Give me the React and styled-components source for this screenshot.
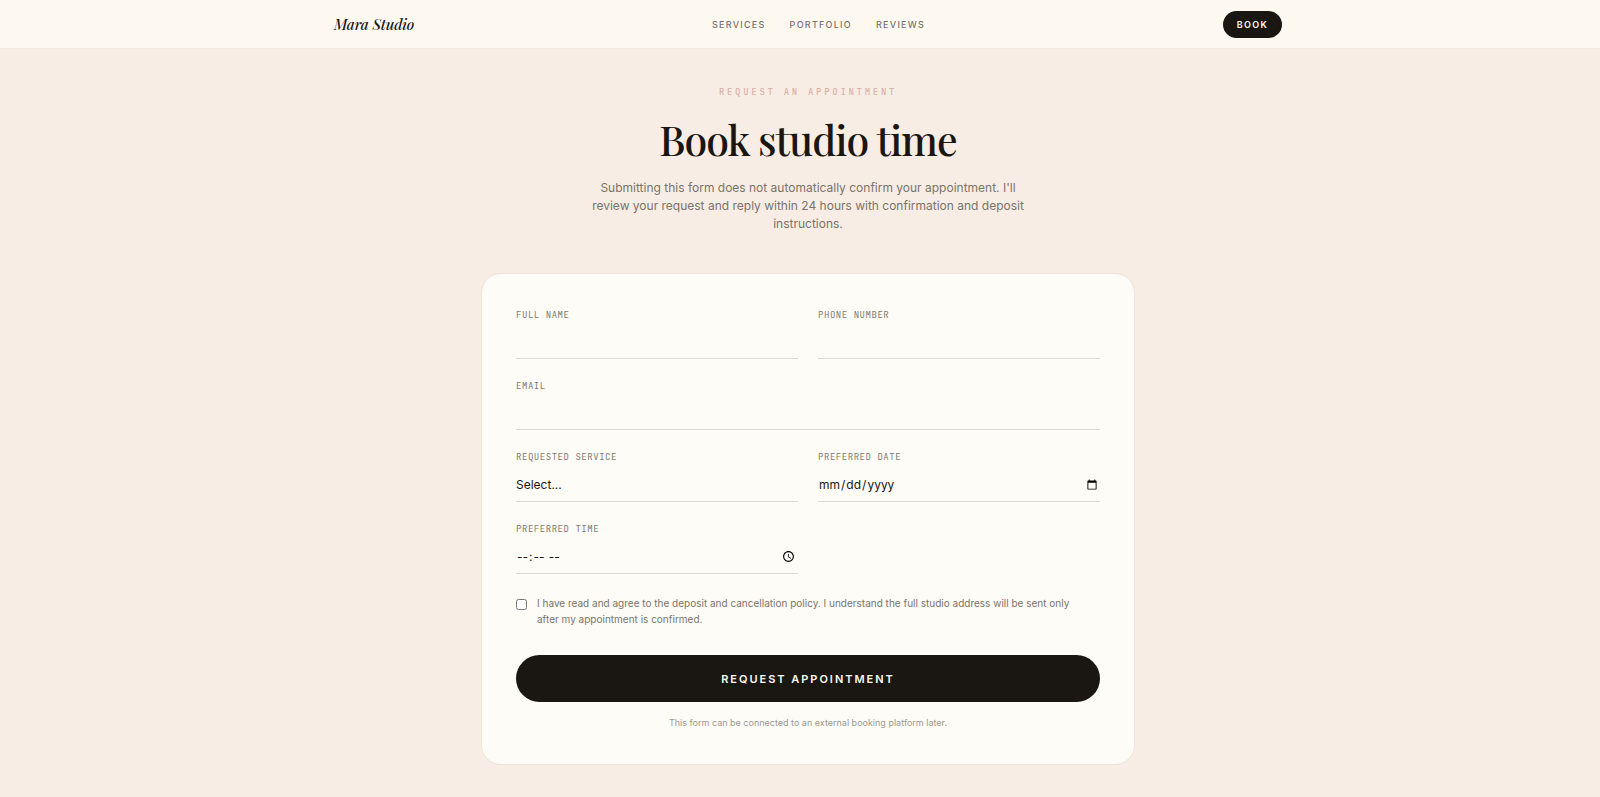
import { useState } from "react";
import styled, { createGlobalStyle } from "styled-components";

const GlobalStyle = createGlobalStyle`
  * {
    box-sizing: border-box;
  }

  body {
    margin: 0;
    background-color: #f8ede4;
    color: #1a1612;
    font-family: Inter, "Liberation Sans", sans-serif;
    -webkit-font-smoothing: antialiased;
  }
`;

const Header = styled.header`
  background-color: #fdf9f1;
  border-bottom: 1px solid #f3ebe2;
  padding-left: 16px;
`;

const HeaderInner = styled.div`
  max-width: 948px;
  height: 48px;
  margin: 0 auto;
  display: flex;
  align-items: center;
  justify-content: space-between;
`;

const Logo = styled.a`
  color: #1a1612;
  font-family: "Playfair Display", "Liberation Serif", serif;
  font-size: 15px;
  font-style: italic;
  font-weight: 500;
  letter-spacing: -0.01em;
  text-decoration: none;
  white-space: nowrap;
`;

const Nav = styled.nav`
  display: flex;
  gap: 24px;
`;

const NavLink = styled.a`
  color: #7a746c;
  font-size: 9px;
  font-weight: 500;
  letter-spacing: 0.14em;
  text-transform: uppercase;
  text-decoration: none;
`;

const BookLink = styled.a`
  display: flex;
  align-items: center;
  height: 27px;
  padding: 0 14px;
  border-radius: 14px;
  background-color: #1a1612;
  color: #fdf9f1;
  font-size: 9px;
  font-weight: 600;
  letter-spacing: 0.14em;
  text-transform: uppercase;
  text-decoration: none;
`;

const Main = styled.main`
  padding: 35px 0 33px 16px;
`;

const Intro = styled.section`
  display: flex;
  flex-direction: column;
  align-items: center;
  text-align: center;
`;

const Eyebrow = styled.p`
  margin: 0;
  color: #dbb0a9;
  font-family: "JetBrains Mono", "DejaVu Sans Mono", monospace;
  font-size: 9px;
  font-weight: 500;
  line-height: 16px;
  letter-spacing: 0.3em;
  text-transform: uppercase;
`;

const Title = styled.h1`
  margin: 15px 0 16px;
  font-family: "Playfair Display", "Liberation Serif", serif;
  font-size: 41px;
  font-weight: 500;
  line-height: 48px;
  letter-spacing: -0.025em;
`;

const Lead = styled.p`
  max-width: 436px;
  margin: 0;
  color: #7a736b;
  font-size: 12px;
  line-height: 18px;
`;

const Card = styled.form`
  max-width: 654px;
  margin: 40px auto 0;
  padding: 34px;
  border: 1px solid #eee5db;
  border-radius: 20px;
  background-color: #fdfcf7;
`;

const Grid = styled.div`
  display: grid;
  grid-template-columns: 1fr 1fr;
  gap: 20px;
`;

const Field = styled.div`
  display: flex;
  flex-direction: column;
  grid-column: ${(props) => (props.$wide ? "1 / -1" : "auto")};
`;

const Label = styled.label`
  color: #7f7a73;
  font-family: "JetBrains Mono", "DejaVu Sans Mono", monospace;
  font-size: 9px;
  line-height: 14px;
  letter-spacing: 0.06em;
  text-transform: uppercase;
`;

const Control = styled.input`
  width: 100%;
  height: ${(props) => (props.$tall ? "38px" : "37px")};
  padding: 8px 0 4px;
  border: 0;
  border-bottom: 1px solid #dddbd6;
  border-radius: 0;
  outline: none;
  appearance: none;
  background-color: transparent;
  color: #1a1612;
  font-family: inherit;
  font-size: 12px;

  &:focus {
    border-bottom-color: #1a1612;
  }
`;

const Consent = styled.div`
  display: flex;
  align-items: flex-start;
  gap: 10px;
  margin-top: 21px;
`;

const Checkbox = styled.input`
  flex-shrink: 0;
  width: 11px;
  height: 11px;
  margin: 4px 0 0;
`;

const ConsentText = styled.label`
  max-width: 544px;
  color: #7a736b;
  font-size: 10px;
  line-height: 16px;
`;

const Submit = styled.button`
  width: 100%;
  height: 47px;
  margin-top: 28px;
  border: 0;
  border-radius: 24px;
  background-color: #1a1612;
  color: #fdf9f1;
  font-family: inherit;
  font-size: 11px;
  font-weight: 600;
  letter-spacing: 0.18em;
  text-transform: uppercase;
  cursor: pointer;
`;

const Note = styled.p`
  margin: 14px 0 0;
  color: #9c978f;
  font-size: 9px;
  line-height: 14px;
  text-align: center;
`;

const links = ["Services", "Portfolio", "Reviews"];

const services = ["Soft glam", "Bridal", "Editorial", "Lesson"];

const App = () => {
  const [agreed, setAgreed] = useState(false);

  return (
    <>
      <GlobalStyle />
      <Header>
        <HeaderInner>
          <Logo href="#home">Mara Studio</Logo>
          <Nav>
            {links.map((link) => (
              <NavLink key={link} href={`#${link.toLowerCase()}`}>
                {link}
              </NavLink>
            ))}
          </Nav>
          <BookLink href="#book">Book</BookLink>
        </HeaderInner>
      </Header>

      <Main id="book">
        <Intro>
          <Eyebrow>Request an appointment</Eyebrow>
          <Title>Book studio time</Title>
          <Lead>
            Submitting this form does not automatically confirm your
            appointment. I'll review your request and reply within 24 hours with
            confirmation and deposit instructions.
          </Lead>
        </Intro>

        <Card onSubmit={(e) => e.preventDefault()}>
          <Grid>
            <Field>
              <Label htmlFor="name">Full name</Label>
              <Control id="name" type="text" />
            </Field>
            <Field>
              <Label htmlFor="phone">Phone number</Label>
              <Control id="phone" type="tel" />
            </Field>
            <Field $wide>
              <Label htmlFor="email">Email</Label>
              <Control id="email" type="email" />
            </Field>
            <Field>
              <Label htmlFor="service">Requested service</Label>
              <Control as="select" id="service" $tall defaultValue="">
                <option value="">Select...</option>
                {services.map((service) => (
                  <option key={service}>{service}</option>
                ))}
              </Control>
            </Field>
            <Field>
              <Label htmlFor="date">Preferred date</Label>
              <Control id="date" type="date" $tall />
            </Field>
            <Field>
              <Label htmlFor="time">Preferred time</Label>
              <Control id="time" type="time" $tall />
            </Field>
          </Grid>

          <Consent>
            <Checkbox
              id="policy"
              type="checkbox"
              checked={agreed}
              onChange={(e) => setAgreed(e.target.checked)}
            />
            <ConsentText htmlFor="policy">
              I have read and agree to the deposit and cancellation policy. I
              understand the full studio address will be sent only after my
              appointment is confirmed.
            </ConsentText>
          </Consent>

          <Submit type="submit">Request appointment</Submit>
          <Note>
            This form can be connected to an external booking platform later.
          </Note>
        </Card>
      </Main>
    </>
  );
};

export default App;
